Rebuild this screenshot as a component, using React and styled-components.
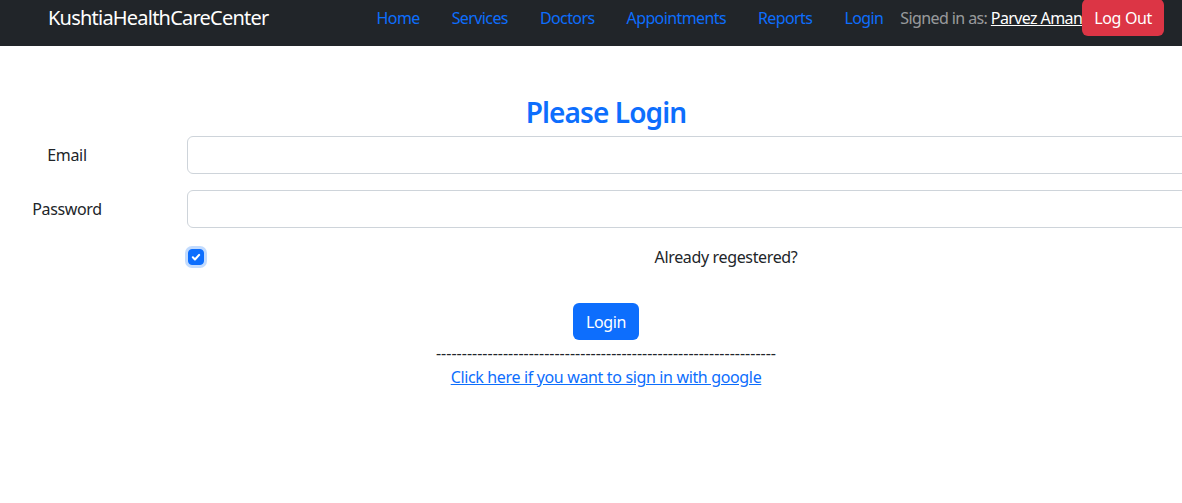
import React, { useState } from 'react';
import styled, { createGlobalStyle } from 'styled-components';

const GlobalStyle = createGlobalStyle`
    html, body {
        margin: 0;
        padding: 0;
        overflow-x: hidden;
        background: #ffffff;
    }
    body {
        font-family: "Noto Sans", "Open Sans", sans-serif;
        font-size: 16px;
        letter-spacing: -0.35px;
        color: #212529;
    }
    * { box-sizing: border-box; }
`;

const NavBar = styled.nav`
    height: 46px;
    background-color: #212529;
    display: flex;
    align-items: flex-start;
    justify-content: space-between;
    padding: 0 18px 0 48px;
`;

const Brand = styled.a`
    color: #ffffff;
    font-size: 20px;
    letter-spacing: -0.78px;
    line-height: 36px;
    text-decoration: none;
`;

const NavRight = styled.div`
    display: flex;
    align-items: center;
    height: 36px;
    letter-spacing: -0.6px;
`;

const NavLink = styled.a`
    color: #0d6efd;
    font-size: 16px;
    padding: 0 16px;
    text-decoration: none;
    line-height: 36px;
`;

const SignedText = styled.span`
    color: rgba(255, 255, 255, 0.55);
    margin-left: 1px;
    line-height: 36px;

    a {
        color: #ffffff;
        text-decoration: underline;
    }
`;

const LogoutButton = styled.button`
    background-color: #dc3545;
    color: #ffffff;
    border: none;
    border-radius: 6px;
    font-family: inherit;
    font-size: 16px;
    letter-spacing: -0.35px;
    height: 37px;
    padding: 0 12px;
    margin-top: -1px;
    cursor: pointer;
`;

const Main = styled.main`
    width: 1212px;
    padding-top: 49px;
`;

const Title = styled.h3`
    margin: 0 0 7px;
    text-align: center;
    color: #0d6efd;
    font-size: 28px;
    font-weight: 600;
    letter-spacing: -0.9px;
    line-height: 34px;
`;

const FormRow = styled.div`
    display: grid;
    grid-template-columns: 134px 1078px;
    column-gap: 53px;
    align-items: center;
    margin-bottom: ${(p) => p.$gap ?? 16}px;
`;

const Label = styled.label`
    text-align: center;
    font-size: 16px;
`;

const Input = styled.input`
    height: 38px;
    width: 100%;
    border: 1px solid #ced4da;
    border-radius: 6px;
    padding: 6px 12px;
    font-family: inherit;
    font-size: 16px;
    outline: none;
`;

const CheckRow = styled.div`
    margin-left: 187px;
    width: 1078px;
    height: 16px;
    margin-top: 21px;
    position: relative;
    display: flex;
    align-items: center;
    justify-content: center;
`;

const CheckBox = styled.span`
    position: absolute;
    left: 1px;
    top: 0;
    width: 16px;
    height: 16px;
    border-radius: 4px;
    background-color: ${(p) => (p.$checked ? '#0d6efd' : '#ffffff')};
    border: 1px solid ${(p) => (p.$checked ? '#0d6efd' : '#ced4da')};
    box-shadow: 0 0 0 3px rgba(13, 110, 253, 0.25);
    display: flex;
    align-items: center;
    justify-content: center;
    cursor: pointer;
`;

const CheckLabel = styled.span`
    font-size: 16px;
    line-height: 24px;
`;

const Center = styled.div`
    display: flex;
    flex-direction: column;
    align-items: center;
    margin-top: 38px;
`;

const PrimaryButton = styled.button`
    background-color: #0d6efd;
    color: #ffffff;
    border: none;
    border-radius: 6px;
    font-family: inherit;
    font-size: 16px;
    letter-spacing: inherit;
    height: 37px;
    padding: 0 13px;
    cursor: pointer;
`;

const Dashes = styled.div`
    line-height: 24px;
    margin-top: 1px;
    letter-spacing: 0;
`;

const GoogleLink = styled.a`
    color: #0d6efd;
    text-decoration: underline;
    line-height: 24px;
`;

const App = () => {
    const [checked, setChecked] = useState(true);

    return (
        <>
            <GlobalStyle />
            <NavBar>
                <Brand href="#">KushtiaHealthCareCenter</Brand>
                <NavRight>
                    <NavLink href="#">Home</NavLink>
                    <NavLink href="#">Services</NavLink>
                    <NavLink href="#">Doctors</NavLink>
                    <NavLink href="#">Appointments</NavLink>
                    <NavLink href="#">Reports</NavLink>
                    <NavLink href="#">Login</NavLink>
                    <SignedText>
                        Signed in as: <a href="#">Parvez Aman</a>
                    </SignedText>
                    <LogoutButton>Log Out</LogoutButton>
                </NavRight>
            </NavBar>

            <Main>
                <Title>Please Login</Title>
                <FormRow>
                    <Label>Email</Label>
                    <Input type="email" />
                </FormRow>
                <FormRow $gap={0}>
                    <Label>Password</Label>
                    <Input type="password" />
                </FormRow>
                <CheckRow>
                    <CheckBox $checked={checked} onClick={() => setChecked((c) => !c)}>
                        {checked && (
                            <svg width="14" height="14" viewBox="0 0 20 20">
                                <path
                                    d="M5.5 10.5l3 3 6-6.5"
                                    fill="none"
                                    stroke="#fff"
                                    strokeWidth="3"
                                    strokeLinecap="round"
                                    strokeLinejoin="round"
                                />
                            </svg>
                        )}
                    </CheckBox>
                    <CheckLabel>Already regestered?</CheckLabel>
                </CheckRow>
                <Center>
                    <PrimaryButton>Login</PrimaryButton>
                    <Dashes>{'-'.repeat(66)}</Dashes>
                    <GoogleLink href="#">Click here if you want to sign in with google</GoogleLink>
                </Center>
            </Main>
        </>
    );
};

export default App;
